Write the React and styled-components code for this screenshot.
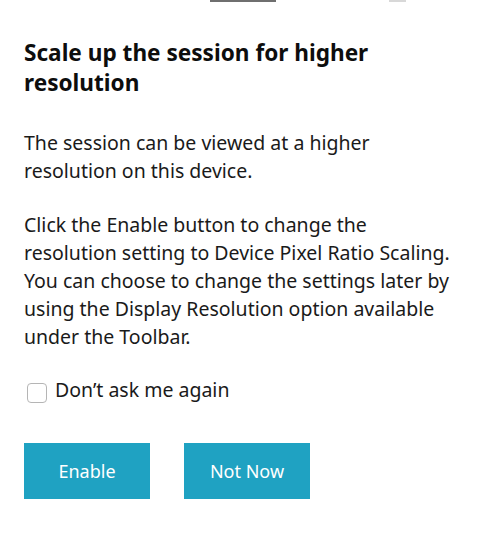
import React from 'react'
import styled, { createGlobalStyle } from 'styled-components'

const Global = createGlobalStyle`
  body {
    margin: 0;
    background: #fff;
    font-family: "Noto Sans", "Open Sans", sans-serif;
    color: #111;
  }
`

const Page = styled.div`
  width: 496px;
  height: 533px;
  overflow: hidden;
`

const TopEdge = styled.div`
  display: flex;
  height: 2px;
  padding-left: 210px;
  gap: 113px;
`

const EdgeMark = styled.div`
  width: ${p => p.w}px;
  height: 2px;
  background: ${p => p.c};
`

const Dialog = styled.div`
  width: 450px;
  padding: 36px 0 0 24px;
`

const Title = styled.h2`
  margin: 0;
  font-size: 22.6px;
  font-weight: 700;
  line-height: 30px;
  color: #0d0d0d;
  white-space: nowrap;
`

const Text = styled.p`
  margin: 0;
  margin-top: ${p => p.top}px;
  font-size: 19.5px;
  line-height: 28px;
  color: #1a1a1a;
  white-space: nowrap;
`

const CheckRow = styled.label`
  display: flex;
  align-items: center;
  gap: 8px;
  margin-top: 25px;
  font-size: 19.5px;
  line-height: 28px;
  color: #1a1a1a;
`

const Box = styled.span`
  width: 20px;
  height: 20px;
  box-sizing: border-box;
  border: 1px solid #b5b5b5;
  border-radius: 4px;
  margin-left: 3px;
  margin-top: 6px;
`

const Buttons = styled.div`
  display: flex;
  gap: 34px;
  margin-top: 39px;
`

const Button = styled.button`
  width: 126px;
  height: 56px;
  border: none;
  background: #1fa2c2;
  color: #fff;
  font-family: inherit;
  font-size: 18px;
  padding: 0;
`

export default function App() {
  return (
    <>
      <Global />
      <Page>
        <TopEdge>
          <EdgeMark w={66} c="#6f6f6f" />
          <EdgeMark w={17} c="#d8d8d8" />
        </TopEdge>
        <Dialog>
          <Title>Scale up the session for higher<br />resolution</Title>
          <Text top={31}>The session can be viewed at a higher<br />resolution on this device.</Text>
          <Text top={26}>
            Click the Enable button to change the<br />
            resolution setting to Device Pixel Ratio Scaling.<br />
            You can choose to change the settings later by<br />
            using the Display Resolution option available<br />
            under the Toolbar.
          </Text>
          <CheckRow>
            <Box />
            Don’t ask me again
          </CheckRow>
          <Buttons>
            <Button>Enable</Button>
            <Button>Not Now</Button>
          </Buttons>
        </Dialog>
      </Page>
    </>
  )
}
